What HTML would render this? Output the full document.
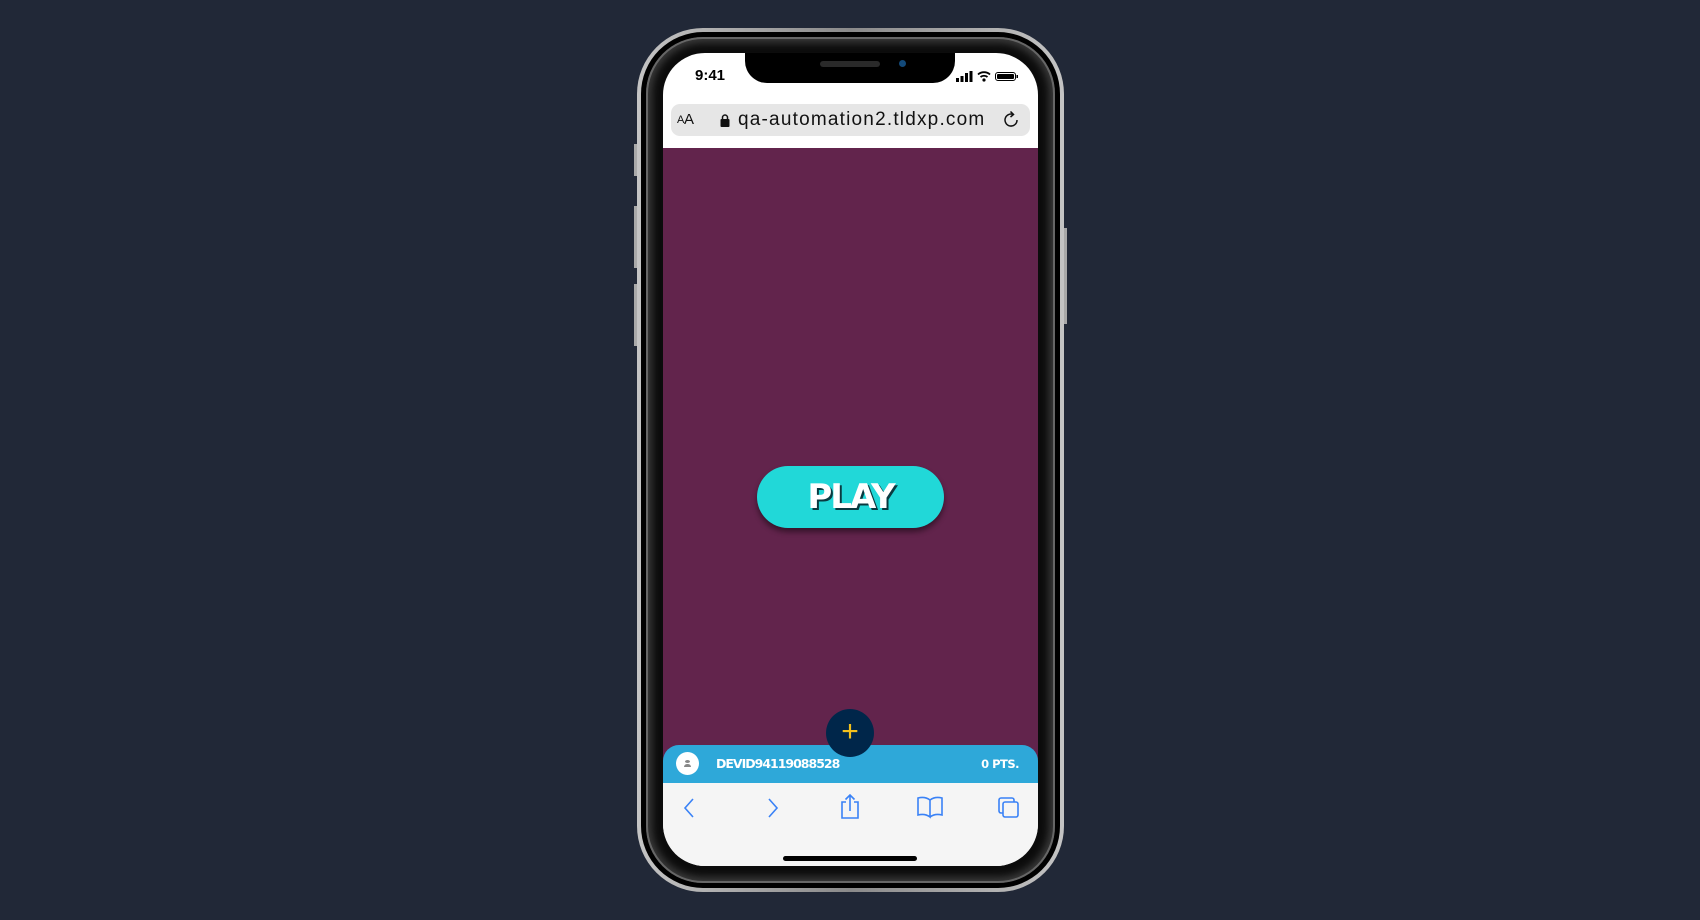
<!DOCTYPE html>
<html><head><meta charset="utf-8"><style>
*{margin:0;padding:0;box-sizing:border-box}
body{width:1700px;height:920px;background:#212837;position:relative;overflow:hidden;font-family:"Liberation Sans",sans-serif}
.btn{position:absolute;background:#a9a9a9;width:4px}
.frame{position:absolute;left:637px;top:28px;width:427px;height:864px;border-radius:66px;background:linear-gradient(90deg,#c4c4c4,#8a8a8a 50%,#c4c4c4);padding:4px}
.f2{width:100%;height:100%;border-radius:62px;background:#000;padding:5px}
.f3{width:100%;height:100%;border-radius:57px;background:#0c0c0c;box-shadow:inset 0 0 0 2px #666,inset 0 0 8px 6px #3a3a3a}
.screen{position:absolute;left:663px;top:53px;width:375px;height:813px;border-radius:42px;overflow:hidden;background:#fff}
.notch{position:absolute;left:82px;top:-2px;width:210px;height:32px;background:#000;border-radius:0 0 22px 22px}
.purple{position:absolute;left:0;top:95px;width:375px;height:640px;background:#62244c}
.addr{position:absolute;left:8px;top:51px;width:359px;height:32px;border-radius:9px;background:#e6e6e6;font-size:19px;color:#111}
.blue{position:absolute;left:0;top:692px;width:375px;height:38px;background:#2ea8d9;border-radius:16px 16px 0 0}
.tool{position:absolute;left:0;top:730px;width:375px;height:83px;background:#f5f5f5}
.play{position:absolute;left:94px;top:318px;width:187px;height:62px;border-radius:31px;background:#21d8d8;box-shadow:0 4px 6px rgba(0,0,0,.45);text-align:center;line-height:62px;font-weight:900;font-size:34px;color:#fff;text-shadow:2px 2px 0 #0a3a40;letter-spacing:-2px;font-family:"DejaVu Sans",sans-serif}
</style></head><body>
<div class="btn" style="left:634px;top:144px;height:32px"></div>
<div class="btn" style="left:634px;top:206px;height:62px"></div>
<div class="btn" style="left:634px;top:284px;height:62px"></div>
<div class="btn" style="left:1063px;top:228px;height:96px"></div>
<div class="frame"><div class="f2"><div class="f3"></div></div></div>
<div class="screen">
 <div class="notch"><div style="position:absolute;left:75px;top:10px;width:60px;height:6px;border-radius:3px;background:#2a2a2a"></div><div style="position:absolute;left:154px;top:9px;width:7px;height:7px;border-radius:50%;background:#134a7a"></div></div>
 <div style="position:absolute;left:32px;top:14px;font-size:15px;font-weight:bold;color:#000">9:41</div>
 <svg style="position:absolute;left:293px;top:17px" width="70" height="12" viewBox="0 0 70 12">
  <rect x="0" y="8" width="3" height="4" fill="#000"/><rect x="4.5" y="6" width="3" height="6" fill="#000"/><rect x="9" y="3" width="3" height="9" fill="#000"/><rect x="13.5" y="1" width="3" height="11" fill="#000"/>
  <path d="M22 4.5a9 9 0 0 1 12 0M24.5 7a5.5 5.5 0 0 1 7 0" stroke="#000" stroke-width="1.8" fill="none"/><circle cx="28" cy="10" r="1.6" fill="#000"/>
  <rect x="39.5" y="2.5" width="20" height="8" rx="2.5" fill="none" stroke="#000"/><rect x="41" y="4" width="17" height="5" rx="1" fill="#000"/><rect x="60.5" y="5" width="1.5" height="3" fill="#000"/>
 </svg>
 <div class="addr">
  <span style="position:absolute;left:6px;top:10px;font-size:11px">A</span><span style="position:absolute;left:13px;top:7px;font-size:15px">A</span>
  <svg style="position:absolute;left:49px;top:10px" width="10" height="13"><rect x="0.5" y="5" width="9" height="8" rx="1" fill="#111"/><path d="M2.5 5V3.5a2.5 2.5 0 0 1 5 0V5" stroke="#111" stroke-width="1.5" fill="none"/></svg>
  <span style="position:absolute;left:67px;top:5px;letter-spacing:1.2px">qa-automation2.tldxp.com</span>
  <svg style="position:absolute;left:331px;top:6px" width="20" height="20" viewBox="0 0 20 20"><path d="M15 10a6 6 0 1 1-4-5.6" stroke="#111" stroke-width="1.5" fill="none"/><path d="M8.5 1.5l3 3-3 2.5" stroke="#111" stroke-width="1.5" fill="none"/></svg>
 </div>
 <div class="purple"><div class="play">PLAY</div></div>
 <div class="blue">
  <div style="position:absolute;left:13px;top:7px;width:23px;height:23px;border-radius:50%;background:#fff"><div style="position:absolute;left:9px;top:8px;width:5px;height:3px;border-radius:50%;background:#888"></div><div style="position:absolute;left:8px;top:12px;width:7px;height:3px;background:#888;border-radius:3px 3px 0 0"></div></div>
  <div style="position:absolute;left:53px;top:11px;font-size:12.5px;font-weight:900;color:#fff;font-family:'DejaVu Sans',sans-serif;letter-spacing:-1px">DEVID94119088528</div>
  <div style="position:absolute;right:19px;top:12px;font-size:11.5px;font-weight:900;color:#fff;font-family:'DejaVu Sans',sans-serif;letter-spacing:-0.5px">0 PTS.</div>
 </div>
 <div style="position:absolute;left:163px;top:656px;width:48px;height:48px;border-radius:50%;background:#00264a;color:#f3c01c;font-size:30px;line-height:46px;text-align:center">+</div>
 <div class="tool">
  <svg width="375" height="40" style="position:absolute;top:10px;left:0" fill="none" stroke="#3a82f6" stroke-width="1.6">
   <path d="M30 6l-8 9 8 9"/><path d="M106 6l8 9-8 9"/>
   <path d="M183 9h-4v16h16V9h-4M187 18V2M182.5 6.5l4.5-4.5 4.5 4.5"/>
   <path d="M255 5c4-1 8-1 12 2v17c-4-3-8-3-12-2zM267 7c4-3 8-3 12-2v17c-4-1-8-1-12 2"/>
   <rect x="336" y="5" width="15" height="15" rx="2"/><rect x="340" y="9" width="15" height="15" rx="2" fill="#f5f5f5"/>
  </svg>
  <div style="position:absolute;left:120px;top:73px;width:134px;height:5px;border-radius:3px;background:#000"></div>
 </div>
</div>
</body></html>
